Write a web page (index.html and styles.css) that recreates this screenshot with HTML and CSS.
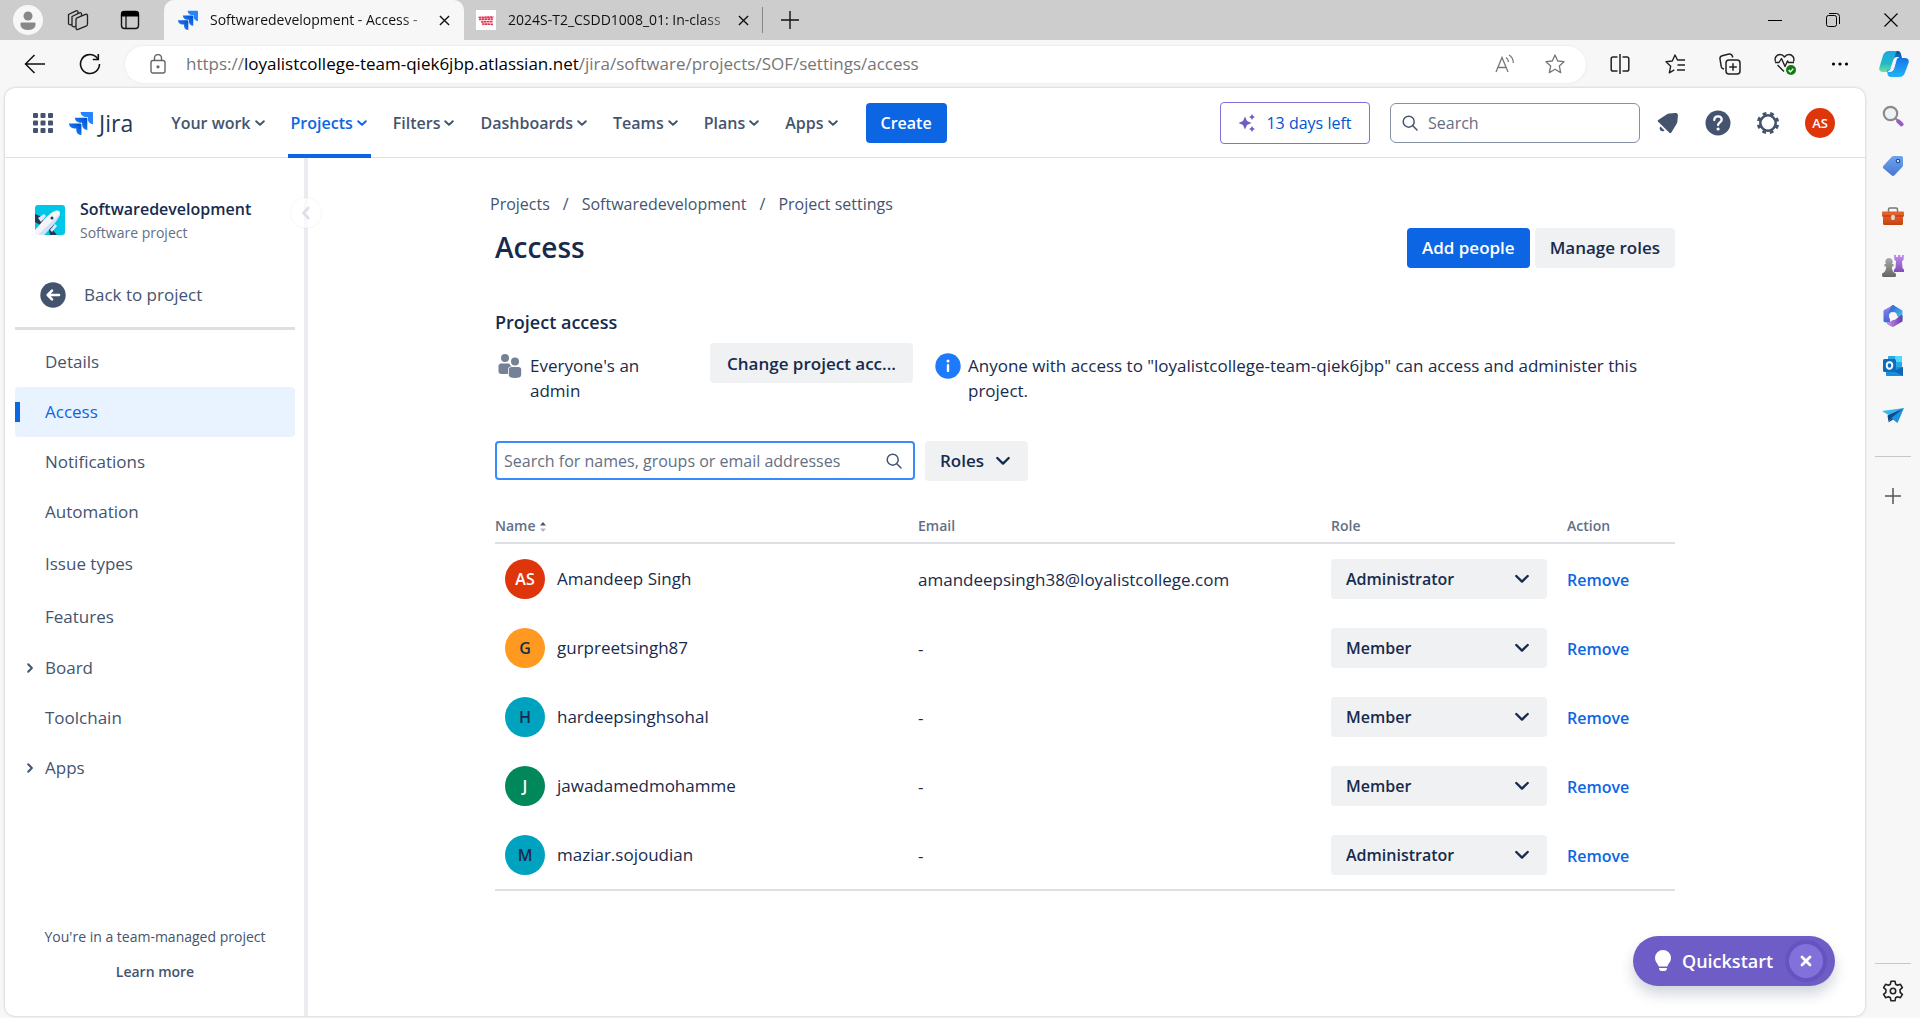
FILE: index.html
```html
<!DOCTYPE html>
<html lang="en">
<head>
<meta charset="utf-8">
<title>Softwaredevelopment - Access - Jira</title>
<link rel="stylesheet" href="styles.css">
</head>
<body>
<svg class="defs" aria-hidden="true">
  <defs>
    <linearGradient id="jiraDark" x1="1" y1="0" x2="0" y2="1"><stop offset="0.1" stop-color="#0052cc"/><stop offset="0.8" stop-color="#2684ff"/></linearGradient>
    <linearGradient id="copA" x1="0" y1="0" x2="0" y2="1"><stop offset="0" stop-color="#1ba8e0"/><stop offset="0.6" stop-color="#22b8c8"/><stop offset="1" stop-color="#6fe39b"/></linearGradient>
    <linearGradient id="copB" x1="0" y1="0" x2="0" y2="1"><stop offset="0" stop-color="#0f4f8f"/><stop offset="0.4" stop-color="#1a7ff0"/><stop offset="1" stop-color="#22b4f4"/></linearGradient>
    <linearGradient id="tagG" x1="0" y1="0" x2="0" y2="1"><stop offset="0" stop-color="#6ea5ee"/><stop offset="1" stop-color="#4777d4"/></linearGradient>
    <linearGradient id="boxG" x1="0" y1="0" x2="0" y2="1"><stop offset="0" stop-color="#e8622a"/><stop offset="1" stop-color="#c2410f"/></linearGradient>
    <linearGradient id="grayG" x1="0" y1="0" x2="0" y2="1"><stop offset="0" stop-color="#aaa"/><stop offset="1" stop-color="#666"/></linearGradient>
    <linearGradient id="rookG" x1="0" y1="0" x2="0" y2="1"><stop offset="0" stop-color="#c58cf0"/><stop offset="1" stop-color="#7d4fb8"/></linearGradient>
    <linearGradient id="mA" x1="0" y1="0" x2="0" y2="1"><stop offset="0" stop-color="#9a7be8"/><stop offset="1" stop-color="#3b6fd8"/></linearGradient>
    <linearGradient id="mB" x1="0" y1="0" x2="1" y2="1"><stop offset="0" stop-color="#2f5fd0"/><stop offset="1" stop-color="#4cc6f2"/></linearGradient>
    <linearGradient id="mC" x1="0" y1="0" x2="1" y2="0"><stop offset="0" stop-color="#c78bf0"/><stop offset="1" stop-color="#6b3fa8"/></linearGradient>
    <symbol id="jira" viewBox="0 0 24 24">
      <path fill="#2684ff" d="M23 1H11.6a5.1 5.1 0 0 0 5.1 5.1h2.1v2A5.1 5.1 0 0 0 24 13.200V2a1 1 0 0 0-1-1z"/>
      <path fill="url(#jiraDark)" d="M17.300 6.700H5.900a5.100 5.100 0 0 0 5.100 5.100h2.100v2a5.100 5.100 0 0 0 5.200 5.100V7.700a1 1 0 0 0-1-1z"/>
      <path fill="url(#jiraDark)" d="M11.500 12.400H0a5.100 5.100 0 0 0 5.200 5.100h2.100v2a5.100 5.100 0 0 0 5.100 4.500V13.400a1 1 0 0 0-.900-1z"/>
    </symbol>
    <symbol id="down" viewBox="0 0 12 12"><path d="M2.200 4.200 6 7.900l3.800-3.700" fill="none" stroke="currentColor" stroke-width="2" stroke-linecap="round" stroke-linejoin="round"/></symbol>
    <symbol id="down-large" viewBox="0 0 20 20"><path d="M4.300 7 10 12.600 15.700 7" fill="none" stroke="currentColor" stroke-width="2.400" stroke-linecap="round" stroke-linejoin="round"/></symbol>
    <symbol id="cross" viewBox="0 0 12 12"><path d="M1 1l10 10M11 1 1 11" fill="none" stroke="currentColor" stroke-width="1.500"/></symbol>
    <symbol id="lens" viewBox="0 0 16 16"><circle cx="6.700" cy="6.700" r="5.500" fill="none" stroke="currentColor" stroke-width="1.500"/><path d="M10.800 10.800 15 15" stroke="currentColor" stroke-width="1.500" stroke-linecap="round"/></symbol>
  </defs>
</svg>

<div class="browser">
  <header class="tabstrip">
    <button class="profile" aria-label="Profile"><svg viewBox="0 0 30 30" width="30" height="30"><circle cx="15" cy="15" r="15" fill="#f7f7f7"/><circle cx="15" cy="11" r="4.500" fill="#8a8886"/><path d="M8 18h14v2c0 3-3 4.500-7 4.500S8 23 8 20z" fill="#8a8886" stroke="#8a8886" stroke-linejoin="round"/></svg></button>
    <button class="strip-btn" aria-label="Workspaces"><svg viewBox="0 0 22 22" width="22" height="22" fill="#cdcdcd" stroke="#222" stroke-width="1.300" stroke-linejoin="round"><path d="M1.500 5.500 9 1.800c1-.5 2 0 2 1V12l-7.500 4-2-1z"/><path d="M5 7.500l7.500-3.700c1-.5 2 0 2 1V14L7 18l-2-1z"/><path d="M9 10.500c0-.8.400-1.400 1-1.700l8.500-3.500c1-.4 2 .2 2 1.200v8.700c0 .8-.400 1.400-1 1.700l-8.500 3.500c-1 .4-2-.2-2-1.200z"/></svg></button>
    <button class="strip-btn" aria-label="Tab actions"><svg viewBox="0 0 20 20" width="20" height="20"><rect x="1.500" y="1.500" width="17" height="17" rx="3" fill="none" stroke="#111" stroke-width="1.400"/><path d="M1 6.500V4a3 3 0 0 1 3-3h12a3 3 0 0 1 3 3v2.500z" fill="#000"/><path d="M6 6v12" stroke="#111" stroke-width="1.300"/></svg></button>
    <div class="tab tab-active">
      <svg width="20" height="20"><use href="#jira"/></svg>
      <span class="tab-title">Softwaredevelopment - Access -</span>
      <button class="tab-close" aria-label="Close tab"><svg width="11" height="11"><use href="#cross"/></svg></button>
    </div>
    <div class="tab">
      <svg width="20" height="20" viewBox="0 0 20 20"><path fill="#fff" d="M0 0h20v20H0z"/><path d="M2.500 7.500l15-.5M3 9.500l14-.5M5 12l12-.5M6 14l11 .3" stroke="#e8304f" stroke-width="1.700" stroke-dasharray="2.500 .4"/></svg>
      <span class="tab-title">2024S-T2_CSDD1008_01: In-class</span>
      <button class="tab-close" aria-label="Close tab"><svg width="11" height="11"><use href="#cross"/></svg></button>
    </div>
    <button class="new-tab" aria-label="New tab"><svg width="18" height="18" viewBox="0 0 18 18"><path d="M9 0v18M0 9h18" stroke="#111" stroke-width="1.400"/></svg></button>
    <div class="window-controls">
      <button aria-label="Minimize"><svg width="14" height="14" viewBox="0 0 14 14"><path d="M0 7.500h14" stroke="#000"/></svg></button>
      <button aria-label="Restore"><svg width="14" height="14" viewBox="0 0 14 14" fill="none" stroke="#000"><rect x=".5" y="2.500" width="10" height="11" rx="2"/><path d="M3 .5h7.500a3 3 0 0 1 3 3V11"/></svg></button>
      <button aria-label="Close"><svg width="14" height="14" viewBox="0 0 14 14"><path d="M.5.5l13 13M13.500.5l-13 13" stroke="#000" stroke-width="1.100"/></svg></button>
    </div>
  </header>

  <div class="toolbar">
    <button aria-label="Back"><svg width="22" height="20" viewBox="0 0 22 20" fill="none" stroke="#111" stroke-width="1.500"><path d="M21 10H1.500M10.500 1 1.500 10l9 9"/></svg></button>
    <button aria-label="Refresh"><svg width="22" height="22" viewBox="0 0 22 22" fill="none" stroke="#111" stroke-width="1.600"><path d="M20.500 11A9.500 9.500 0 1 1 16.500 3.300L19 6"/><path d="M19.300 1v5.500h-5.500"/></svg></button>
    <div class="address">
      <svg width="16" height="20" viewBox="0 0 16 20" fill="none" stroke="#666" stroke-width="1.400"><rect x="1" y="6.500" width="14" height="12.500" rx="2"/><path d="M4.500 6.500V4a3.500 3.500 0 0 1 7 0v2.500"/><circle cx="8" cy="12.800" r=".9" fill="#666"/></svg>
      <span class="url">https://<b>loyalistcollege-team-qiek6jbp.atlassian.net</b>/jira/software/projects/SOF/settings/access</span>
      <button aria-label="Read aloud"><svg width="20" height="20" viewBox="0 0 20 20" fill="none" stroke="#777" stroke-width="1.300"><path d="M1 18 7 3.500 13 18M3 13.500h8M11 3.500c1.500 1 2.500 2.500 2.500 4.500M14 1c2.500 1.500 4.300 4.500 4.300 8"/></svg></button>
      <button aria-label="Add to favourites"><svg width="20" height="20" viewBox="0 0 20 20" fill="none" stroke="#777" stroke-width="1.300" stroke-linejoin="round"><path d="M10 1l2.700 6 6.300.7-4.700 4.300 1.400 6.600L10 15.200l-5.700 3.400 1.400-6.600L1 7.700 7.300 7z"/></svg></button>
    </div>
    <div class="tools">
      <button aria-label="Split screen"><svg width="20" height="20" viewBox="0 0 20 20" fill="none" stroke="#222" stroke-width="1.500"><path d="M7.500 3H3a1.800 1.800 0 0 0-1.800 1.800v10.400A1.800 1.800 0 0 0 3 17h4.500M12.500 3H17a1.800 1.800 0 0 1 1.800 1.800v10.400A1.800 1.800 0 0 1 17 17h-4.500M10 0v20"/></svg></button>
      <button aria-label="Favourites"><svg width="20" height="20" viewBox="0 0 20 20" fill="none" stroke="#222" stroke-width="1.400" stroke-linejoin="round"><path d="M20 6h-7.500L10 1 7.300 7 1 7.700l4.700 4.500L4.300 18.800l5-3M12.500 11H20M12 16h8"/></svg></button>
      <button aria-label="Collections"><svg width="22" height="22" viewBox="0 0 22 22" fill="none" stroke="#222" stroke-width="1.500"><rect x="7" y="7" width="14" height="14" rx="3"/><path d="M14 10.200v7.600M10.200 14h7.600M5 16l-.9-.3a2.500 2.500 0 0 1-1.800-1.800L1 6a3 3 0 0 1 2.200-3.300L10 1a3 3 0 0 1 3.400 2l.3 1.500"/></svg></button>
      <button aria-label="Browser essentials"><svg width="22" height="22" viewBox="0 0 22 22" fill="none" stroke="#222" stroke-width="1.400" stroke-linejoin="round"><path d="M1.500 8.500C0 4.500 3 1.500 6 1.500c2.200 0 3.700 1.300 4.500 2.500.8-1.200 2.300-2.500 4.500-2.500 3 0 6 3 4.500 7M1 9.500h4l2.500-4 3.500 8L13.500 8l1 1.500h5.500M3.500 12l6.500 6.500"/><circle cx="17" cy="17" r="5" fill="#107c10" stroke="none"/><path d="M14.700 17l1.700 1.900 2.800-3.200" stroke="#fff"/></svg></button>
      <button aria-label="More"><svg width="18" height="6" viewBox="0 0 18 6"><circle cx="2.500" cy="3" r="1.600"/><circle cx="9" cy="3" r="1.600"/><circle cx="15.500" cy="3" r="1.600"/></svg></button>
      <button aria-label="Copilot"><svg width="30" height="28" viewBox="0 0 30 28"><path d="M10 1h8c2 0 3 1 3.500 3l1 4H18c-2 0-3 1-3.500 3l-2.500 8c-.6 2-1.500 3-3.500 3H4c-3 0-4.500-2-3.500-5L4 5.500C5 2.500 7 1 10 1z" fill="url(#copA)"/><path d="M18 1h.5c2 0 3 1 3.500 3l1 4H26c3 0 4.500 2 3.500 5L26 22.500c-1 3-3 4.500-6 4.500h-8c-2 0-3-1-3.500-3L8 20c2 0 3.300-1 4-3l4-11c.3-1.500.6-3.500 2-5z" fill="url(#copB)"/><path d="M19.500 7.500h-1.500c-2 0-2.800 1-3.400 3L12 18.500c-.7 2-1.500 2.700-3 3h1.500c2.500 0 3.500-.8 4.200-3l2.300-8c.5-1.800 1-2.700 2.500-3z" fill="#f7f7f7" stroke="#f7f7f7"/></svg></button>
    </div>
  </div>

  <div class="body">
    <div class="page">
      <header class="jira-header">
        <button class="apps" aria-label="Switch apps"><svg width="20" height="20" viewBox="0 0 20 20" fill="#44546f"><rect width="5" height="5" rx="1"/><rect x="7.500" width="5" height="5" rx="1"/><rect x="15" width="5" height="5" rx="1"/><rect y="7.500" width="5" height="5" rx="1"/><rect x="7.500" y="7.500" width="5" height="5" rx="1"/><rect x="15" y="7.500" width="5" height="5" rx="1"/><rect y="15" width="5" height="5" rx="1"/><rect x="7.500" y="15" width="5" height="5" rx="1"/><rect x="15" y="15" width="5" height="5" rx="1"/></svg></button>
        <a class="brand" href="#"><svg width="24" height="24"><use href="#jira"/></svg>Jira</a>
        <nav class="menu">
          <a href="#">Your work<svg><use href="#down"/></svg></a>
          <a href="#" class="current">Projects<svg><use href="#down"/></svg></a>
          <a href="#">Filters<svg><use href="#down"/></svg></a>
          <a href="#">Dashboards<svg><use href="#down"/></svg></a>
          <a href="#">Teams<svg><use href="#down"/></svg></a>
          <a href="#">Plans<svg><use href="#down"/></svg></a>
          <a href="#">Apps<svg><use href="#down"/></svg></a>
        </nav>
        <button class="btn primary create">Create</button>
        <button class="trial"><svg width="18" height="18" viewBox="0 0 18 18" fill="#6e5dc6"><path d="M7 2.500l2 4.500 4.500 2L9 11l-2 4.500L5 11 .5 9 5 7zM14 0l1.100 1.900L17 3l-1.900 1.100L14 6l-1.100-1.900L11 3l1.900-1.100zM14 12l1.100 1.900L17 15l-1.900 1.100L14 18l-1.100-1.900L11 15l1.900-1.100z"/></svg>13 days left</button>
        <label class="search"><svg width="16" height="16"><use href="#lens"/></svg><input type="text" placeholder="Search" aria-label="Search"></label>
        <div class="head-icons">
          <button aria-label="Notifications"><svg width="22" height="22" viewBox="0 0 22 22" fill="#44546f"><path d="M20.300 1.700c.6.600.7 1.300.6 2.300l-.5 5.500c-.1 1-.3 1.600-.9 2.400l-5 8.400c-.6 1-1.300 1.200-2.100.4L1.200 9.700C.4 8.900.6 8.200 1.600 7.700L10 2.300c.8-.5 1.500-.7 2.400-.8L18 1c1 0 1.700.1 2.300.7zM3.500 14.500l4 4c-1.200 1.200-3 1-4 0-1.100-1-1.200-2.800 0-4z"/></svg></button>
          <button aria-label="Help"><svg width="26" height="26" viewBox="0 0 26 26"><circle cx="13" cy="13" r="12.500" fill="#44546f"/><path d="M9.300 10c0-2.200 1.600-3.700 3.700-3.700s3.700 1.400 3.700 3.400c0 2.500-3.600 2.900-3.600 5.300" fill="none" stroke="#fff" stroke-width="2.300" stroke-linecap="round"/><circle cx="13.100" cy="19" r="1.600" fill="#fff"/></svg></button>
          <button aria-label="Settings"><svg width="24" height="24" viewBox="0 0 24 24" fill="none" stroke="#44546f"><circle cx="12" cy="12" r="7.700" stroke-width="2.600"/><circle cx="12" cy="12" r="9.700" stroke-width="3" stroke-dasharray="3.800 3.818" stroke-dashoffset="-1.900"/></svg></button>
          <button class="avatar small red" aria-label="Your profile">AS</button>
        </div>
      </header>

      <div class="columns">
        <aside class="sidebar">
          <div class="project">
            <svg width="30" height="30" viewBox="0 0 30 30"><rect width="30" height="30" rx="3" fill="#00c7e5"/><path d="M0 9l5 2 4 5 3-1-5 6-7-4zM13 21l5-5 1 5-2 3 5 6h-7z" fill="#253858"/><path d="M3 13l6-4 2 2-5 6zM15 25l5-6 2 2-5 6z" fill="#deebff"/><path d="M0 25C7 17 14 8 20 6c3-1 5 0 5 2 0 4-6 11-16 22H0z" fill="#f4f5f7"/><path d="M3 30C12 21 20 14 25 9c-1 5-8 13-16 21z" fill="#cfe0fb"/><circle cx="17" cy="13" r="1.500" fill="#253858"/></svg>
            <div><h2>Softwaredevelopment</h2><p>Software project</p></div>
          </div>
          <a class="back" href="#"><svg width="26" height="26" viewBox="0 0 26 26"><circle cx="13" cy="13" r="12.700" fill="#44546f"/><path d="M19 13H8.500M12 8.700 7.700 13l4.300 4.300" fill="none" stroke="#fff" stroke-width="2.600" stroke-linecap="round" stroke-linejoin="round"/></svg>Back to project</a>
          <nav class="side-nav">
            <a href="#">Details</a>
            <a href="#" class="selected">Access</a>
            <a href="#">Notifications</a>
            <a href="#">Automation</a>
            <a href="#" class="roomy">Issue types</a>
            <a href="#" class="roomy">Features</a>
            <a href="#"><svg class="right"><use href="#down"/></svg>Board</a>
            <a href="#">Toolchain</a>
            <a href="#"><svg class="right"><use href="#down"/></svg>Apps</a>
          </nav>
          <footer class="side-foot"><p>You're in a team-managed project</p><a href="#">Learn more</a></footer>
          <button class="collapse" aria-label="Collapse sidebar"><svg width="16" height="16" class="left"><use href="#down"/></svg></button>
        </aside>

        <main class="content">
          <nav class="crumbs"><a href="#">Projects</a><span>/</span><a href="#">Softwaredevelopment</a><span>/</span><a href="#">Project settings</a></nav>
          <div class="title-row">
            <h1>Access</h1>
            <button class="btn primary">Add people</button>
            <button class="btn">Manage roles</button>
          </div>
          <h3>Project access</h3>
          <div class="access-row">
            <svg width="24" height="24" viewBox="0 0 24 24" fill="#758195"><circle cx="7" cy="4" r="4"/><circle cx="17" cy="7.500" r="4"/><path d="M3 9.500h7.500c.6 0 1 .3 1.500 1a5 5 0 0 0 1.500 2H13c-2 0-3 1.500-3 3V20H3.500C1.500 20 .5 19 .5 17.500V12c0-1.500 1-2.500 2.500-2.500z"/><path d="M13.500 13h7c1.600 0 2.700 1 2.700 2.600V21c0 2-2 3-6.200 3s-6.200-1-6.200-3v-5.400C10.800 14 11.900 13 13.500 13z"/></svg>
            <p class="who">Everyone's an admin</p>
            <button class="btn">Change project acc...</button>
            <svg width="26" height="26" viewBox="0 0 26 26"><circle cx="13" cy="13" r="12.700" fill="#1d7afc"/><circle cx="13" cy="8" r="1.500" fill="#fff"/><rect x="11.800" y="11" width="2.400" height="8" rx="1" fill="#fff"/></svg>
            <p class="note">Anyone with access to "loyalistcollege-team-qiek6jbp" can access and administer this project.</p>
          </div>
          <div class="filters">
            <label class="people-search"><input type="text" placeholder="Search for names, groups or email addresses" aria-label="Search for names, groups or email addresses"><svg width="16" height="16"><use href="#lens"/></svg></label>
            <button class="btn roles">Roles<svg width="20" height="20"><use href="#down-large"/></svg></button>
          </div>
          <table class="people">
            <colgroup><col class="c-name"><col class="c-mail"><col class="c-role"><col></colgroup>
            <thead><tr><th>Name<svg width="6" height="12" viewBox="0 0 6 12"><path d="M3 1l3 3.500H0z" fill="#44546f"/><path d="M3 11l3-3.500H0z" fill="#b3b9c4"/></svg></th><th>Email</th><th>Role</th><th>Action</th></tr></thead>
            <tbody>
              <tr><td><div class="person"><span class="avatar red">AS</span>Amandeep Singh</div></td><td>amandeepsingh38@loyalistcollege.com</td><td><div class="pick"><select aria-label="Role of Amandeep Singh"><option>Administrator</option><option>Member</option></select><svg><use href="#down-large"/></svg></div></td><td><button class="remove">Remove</button></td></tr>
              <tr><td><div class="person"><span class="avatar orange">G</span>gurpreetsingh87</div></td><td>-</td><td><div class="pick"><select aria-label="Role of gurpreetsingh87"><option>Member</option><option>Administrator</option></select><svg><use href="#down-large"/></svg></div></td><td><button class="remove">Remove</button></td></tr>
              <tr><td><div class="person"><span class="avatar teal">H</span>hardeepsinghsohal</div></td><td>-</td><td><div class="pick"><select aria-label="Role of hardeepsinghsohal"><option>Member</option><option>Administrator</option></select><svg><use href="#down-large"/></svg></div></td><td><button class="remove">Remove</button></td></tr>
              <tr><td><div class="person"><span class="avatar green">J</span>jawadamedmohamme</div></td><td>-</td><td><div class="pick"><select aria-label="Role of jawadamedmohamme"><option>Member</option><option>Administrator</option></select><svg><use href="#down-large"/></svg></div></td><td><button class="remove">Remove</button></td></tr>
              <tr><td><div class="person"><span class="avatar teal">M</span>maziar.sojoudian</div></td><td>-</td><td><div class="pick"><select aria-label="Role of maziar.sojoudian"><option>Administrator</option><option>Member</option></select><svg><use href="#down-large"/></svg></div></td><td><button class="remove">Remove</button></td></tr>
            </tbody>
          </table>
        </main>
      </div>
      <div class="quickstart">
        <button class="qs-open"><svg width="16" height="22" viewBox="0 0 16 22" fill="#fff"><path d="M8 0a8 8 0 0 1 8 8c0 3-1.600 4.600-2.800 6.400-.5.800-.7 1.600-1 2.100H3.800c-.3-.5-.5-1.300-1-2.100C1.600 12.600 0 11 0 8a8 8 0 0 1 8-8zM4 18h8c0 2-1 3-2.500 3h-3C5 21 4 20 4 18z"/></svg>Quickstart</button>
        <button class="qs-close" aria-label="Dismiss"><svg width="12" height="12" viewBox="0 0 12 12"><path d="M2 2l8 8M10 2l-8 8" stroke="#fff" stroke-width="2.800" stroke-linecap="round"/></svg></button>
      </div>
    </div>

    <aside class="edge-bar">
      <button aria-label="Search"><svg width="22" height="22" viewBox="0 0 22 22"><path d="M13 13l3 2.700" stroke="#8a8a8a" stroke-width="2"/><path d="M16.300 16.300l3.200 3" stroke="#9b59d0" stroke-width="4" stroke-linecap="round"/><circle cx="8.500" cy="8.500" r="6.700" fill="#eef2f5" stroke="#8a8a8a" stroke-width="2.200"/></svg></button>
      <button aria-label="Shopping"><svg width="22" height="22" viewBox="0 0 22 22"><path d="M12 1h7c1.500 0 2 .8 2 2v7c0 1-.3 1.500-1 2.300l-7.500 8c-1 1-2 1-3 0L1.500 13.500c-1-1-.8-2 0-2.800L9.500 2c.8-.8 1.500-1 2.500-1z" fill="url(#tagG)"/><circle cx="16" cy="6" r="1.700" fill="#fff" stroke="#2450a4" stroke-width="1.300"/></svg></button>
      <button aria-label="Tools"><svg width="22" height="18" viewBox="0 0 22 18"><path d="M6.500 5V2.500c0-.8.500-1.500 1.500-1.500h6c1 0 1.500.7 1.500 1.500V5" fill="none" stroke="#777" stroke-width="1.500"/><rect x="1" y="8" width="20" height="10" rx="1.500" fill="url(#boxG)"/><rect y="4.500" width="22" height="4.500" rx="1" fill="#e5602b"/><path d="M0 9h22" stroke="#a5350b"/><rect x="9.200" y="8" width="3.600" height="5" rx="1.200" fill="#d9d9d9"/></svg></button>
      <button aria-label="Games"><svg width="22" height="24" viewBox="0 0 22 24"><path d="M12 1h2v2h2V1h2.500v2h1.500V1h2l-.500 5-1.500 1 .5 7 1.500 1.500V18H12v-2.500l1.500-1.500.5-7-1.500-1z" fill="url(#rookG)"/><path d="M7 4a3.800 3.800 0 0 1 3 6h1.500v2.500H9.800c.2 3 .7 4.500 2.200 6 1.500 0 2 1 2 2.500 0 1.500-.5 2-1.500 2h-11C.5 23 0 22.500 0 21c0-1.500.5-2.500 2-2.500 1.500-1.500 2-3 2.200-6H2.500V10H4a3.800 3.800 0 0 1 3-6z" fill="url(#grayG)"/></svg></button>
      <button aria-label="Microsoft 365"><svg width="22" height="24" viewBox="0 0 22 24" stroke-width="2" stroke-linejoin="round"><path d="M11 2 2.500 7v10L7 18V9z" fill="url(#mA)" stroke="url(#mA)"/><path d="M11 2l8.500 5v8L14 9 7.500 8.500z" fill="url(#mB)" stroke="url(#mB)"/><path d="M19.500 12v5L11 22l-5-2.500L14 16z" fill="url(#mC)" stroke="url(#mC)"/><circle cx="11" cy="12" r="4" fill="#f7f7f7"/></svg></button>
      <button aria-label="Outlook"><svg width="22" height="22" viewBox="0 0 22 22"><rect x="6" y="1" width="14" height="18" rx="1" fill="#28a8ea"/><path d="M13 1h7v6h-7z" fill="#50d9ff"/><path d="M4 12l17 0v8c0 .6-.4 1-1 1H5c-.6 0-1-.4-1-1z" fill="#1490df"/><path d="M21 12v9L12 16z" fill="#1066b5"/><rect x="1" y="4" width="13" height="13" rx="1.500" fill="#0f6cbd"/><ellipse cx="7.500" cy="10.500" rx="2.800" ry="3.200" fill="none" stroke="#fff" stroke-width="1.900"/></svg></button>
      <button aria-label="Drop"><svg width="22" height="18" viewBox="0 0 22 18"><path d="M0 4 22 1 8 9z" fill="#38b6f1"/><path d="M22 1 15.500 16 9 11z" fill="#1b93e0"/><path d="M22 1 5.500 8.500 6.500 15 9.500 11z" fill="#0c4a8a"/><path d="M9.500 11 6.500 15.500l4.500-3z" fill="#083a70"/></svg></button>
      <hr>
      <button aria-label="Customize"><svg width="16" height="16" viewBox="0 0 16 16"><path d="M8 0v16M0 8h16" stroke="#555" stroke-width="1.500"/></svg></button>
      <div class="edge-end">
        <hr>
        <button aria-label="Settings"><svg width="22" height="22" viewBox="0 0 22 22" fill="none" stroke="#222" stroke-width="1.600" stroke-linejoin="round"><path d="M9 1.200h4l.6 3 1.900 1.100 2.900-1 2 3.400-2.300 2v2.600l2.300 2-2 3.400-2.900-1-1.900 1.100-.6 3H9l-.6-3-1.900-1.100-2.900 1-2-3.400 2.300-2V9.700l-2.300-2 2-3.400 2.900 1 1.900-1.100z"/><circle cx="11" cy="11" r="2.700"/></svg></button>
      </div>
    </aside>
  </div>
</div>
</body>
</html>
```
FILE: styles.css
```css
* { box-sizing: border-box; }

:root {
  --ink: #172b4d;
  --subtle: #44546f;
  --muted: #626f86;
  --blue: #0c66e4;
  --chrome: #f7f7f7;
}

body {
  margin: 0;
  font: 16px/24px "Open Sans", "Noto Sans", sans-serif;
  color: var(--ink);
  background: var(--chrome);
}

h1, h2, h3, p { margin: 0; }
a { color: inherit; text-decoration: none; }
svg { display: block; flex: none; }
button, input, select { font: inherit; color: inherit; }
button {
  display: flex;
  align-items: center;
  justify-content: center;
  padding: 0;
  border: 0;
  background: none;
  white-space: nowrap;
}
.defs { position: absolute; width: 0; height: 0; }

.browser { display: flex; flex-direction: column; min-height: 100vh; }

/* Tab strip */
.tabstrip {
  display: flex;
  align-items: center;
  height: 40px;
  padding-left: 13px;
  background: #cdcdcd;
  color: #111;
  font-size: 14px;
}
.strip-btn { width: 22px; margin-left: 24px; }
.strip-btn + .strip-btn { margin-left: 30px; }
.tab {
  display: flex;
  align-items: center;
  gap: 12px;
  width: 298px;
  height: 40px;
  padding: 0 13px 0 12px;
}
.tab-active {
  width: 300px;
  margin-left: 23px;
  padding: 0 14px;
  background: var(--chrome);
  border-radius: 10px 10px 0 0;
}
.tab-title {
  flex: 1;
  white-space: nowrap;
  mask-image: linear-gradient(to right, #000 88%, #0006);
}
.tab-close { width: 11px; }
.new-tab { width: 54px; height: 26px; border-left: 1px solid #888; }
.window-controls { display: flex; margin-left: auto; }
.window-controls button { width: 58px; height: 40px; }

/* Toolbar */
.toolbar {
  display: flex;
  align-items: center;
  height: 48px;
  padding-left: 24px;
}
.toolbar > button { width: 22px; margin-right: 33px; }
.toolbar > button + button { margin-right: 24px; }
.address {
  flex: 1;
  display: flex;
  align-items: center;
  height: 37px;
  padding: 0 21px 0 25px;
  border-radius: 19px;
  background: #fff;
  box-shadow: 0 0 3px #00000014;
  color: #767676;
  font-size: 17px;
}
.address button { width: 20px; margin-left: 30px; }
.url { flex: 1; margin-left: 20px; white-space: nowrap; }
.url b { font-weight: 400; color: #000; }
.tools { display: flex; padding-left: 6px; }
.tools button { width: 55px; }
.tools button:last-child { width: 53px; }

/* Page frame */
.body { flex: 1; display: flex; padding: 0 0 2px 5px; }
.page {
  position: relative;
  flex: 1;
  display: flex;
  flex-direction: column;
  background: #fff;
  border-radius: 10px;
  box-shadow: 0 0 3px #0000003a;
  overflow: hidden;
}
.edge-bar {
  display: flex;
  flex-direction: column;
  align-items: center;
  width: 55px;
  padding-top: 3px;
}
.edge-bar button { width: 50px; height: 50px; }
.edge-bar hr { width: 36px; margin: 15px 0 14px; border: 0; border-top: 1px solid #c8c8c8; }
.edge-end { margin-top: auto; display: flex; flex-direction: column; align-items: center; }
.edge-end hr { margin: 0 0 2px; }

/* Jira header */
.jira-header {
  display: flex;
  align-items: center;
  height: 70px;
  padding: 0 30px 0 28px;
  border-bottom: 1px solid #dcdfe4;
  color: var(--subtle);
}
.brand {
  display: flex;
  align-items: center;
  gap: 6px;
  margin: 0 35px 0 16px;
  color: #253858;
  font-size: 23px;
  font-weight: 500;
}
.menu { display: flex; align-self: stretch; gap: 19px; font-weight: 600; }
.menu a {
  display: flex;
  align-items: center;
  gap: 3px;
  padding: 0 3px;
  border-block: 4px solid transparent;
  margin-bottom: -1px;
}
.menu svg { width: 12px; height: 12px; }
.menu .current { color: var(--blue); border-bottom-color: var(--blue); }

.btn {
  height: 40px;
  padding: 0 15px;
  border-radius: 4px;
  background: #f0f1f3;
  font-weight: 600;
}
.btn.primary { background: var(--blue); color: #fff; }
.create { margin-left: 24px; }
.trial {
  gap: 10px;
  width: 150px;
  height: 42px;
  margin-left: auto;
  border: 1px solid #8270db;
  border-radius: 4px;
  color: #0055cc;
}
.search {
  display: flex;
  align-items: center;
  gap: 10px;
  width: 250px;
  height: 40px;
  margin: 0 15px 0 20px;
  padding: 0 11px;
  border: 1px solid #8590a2;
  border-radius: 6px;
}
input { border: 0; outline: 0; background: none; min-width: 0; flex: 1; padding: 0; }
input::placeholder { color: var(--muted); opacity: 1; }
.head-icons { display: flex; align-items: center; gap: 24px; }
.head-icons button { width: 26px; }

.avatar {
  display: flex;
  align-items: center;
  justify-content: center;
  width: 40px;
  height: 40px;
  border-radius: 50%;
  font-size: 16px;
  font-weight: 600;
}
.head-icons .small { width: 30px; height: 30px; font-size: 13px; }
.red { background: #de350b; color: #fff; }
.orange { background: #ff991f; }
.teal { background: #00a3bf; }
.green { background: #00875a; color: #fff; }

/* Project sidebar */
.columns { flex: 1; display: flex; font-size: 17px; }
.sidebar {
  position: relative;
  display: flex;
  flex-direction: column;
  width: 303px;
  padding: 38px 9px 27px 10px;
  border-right: 4px solid #ebecf0;
  color: var(--subtle);
}
.project { display: flex; align-items: center; gap: 15px; padding: 0 20px; }
.project h2 { font-size: 16px; line-height: 26px; font-weight: 600; color: var(--ink); }
.project p { font-size: 14px; line-height: 22px; color: var(--muted); }
.back {
  display: flex;
  align-items: center;
  gap: 18px;
  height: 86px;
  padding: 18px 25px 0;
  border-bottom: 3px solid #dcdfe4;
}
.side-nav { display: flex; flex-direction: column; padding-top: 7px; }
.side-nav a {
  display: flex;
  align-items: center;
  height: 50px;
  padding-left: 30px;
  border-radius: 4px;
}
.side-nav .roomy { height: 53px; }
.side-nav .selected {
  color: var(--blue);
  background: linear-gradient(var(--blue), var(--blue)) 0 50% / 5px 20px no-repeat, #e9f2ff;
}
.right { width: 12px; height: 12px; margin: 0 9px 0 -21px; transform: rotate(-90deg); }
.left { transform: rotate(90deg); }
.side-foot { margin-top: auto; text-align: center; font-size: 14px; line-height: 35px; }
.side-foot a { font-weight: 600; }
.collapse {
  position: absolute;
  top: 40px;
  right: -17px;
  width: 30px;
  height: 30px;
  border-radius: 50%;
  background: #ffffffb0;
  box-shadow: 0 0 2px #0000001a;
  color: #dcdfe4;
}

/* Access settings */
.content { flex: 1; min-width: 0; padding: 34px 190px 40px 187px; }
.crumbs { display: flex; gap: 13px; margin-left: -5px; color: var(--subtle); font-size: 16px; }
.title-row { display: flex; align-items: center; gap: 5px; margin-top: 12px; }
h1 { flex: 1; padding-bottom: 2px; font-size: 28px; line-height: 36px; font-weight: 600; }
h3 { margin-top: 41px; font-size: 18px; line-height: 26px; font-weight: 600; }
.access-row { display: flex; align-items: flex-start; margin-top: 8px; line-height: 25px; }
.access-row > svg { margin: 11px 8px 0 3px; }
.access-row > .btn { width: 203px; }
.access-row > .btn + svg { margin: 10px 7px 0 22px; }
.access-row p { padding-top: 10px; }
.who { width: 130px; margin-right: 50px; }
.note { flex: 1; max-width: 690px; }
.filters { display: flex; gap: 10px; margin-top: 38px; }
.people-search {
  display: flex;
  align-items: center;
  width: 420px;
  height: 39px;
  padding: 0 11px 0 7px;
  border: 2px solid #388bff;
  border-radius: 4px;
  color: var(--subtle);
  font-size: 16px;
}
.roles { gap: 9px; }

.people { width: 100%; margin-top: 28px; border-spacing: 0; table-layout: fixed; }
.c-name { width: 423px; }
.c-mail { width: 413px; }
.c-role { width: 236px; }
.people th {
  height: 35px;
  padding: 0;
  border-bottom: 2px solid #dcdfe4;
  text-align: left;
  font-size: 14px;
  font-weight: 600;
  color: var(--muted);
}
.people th svg { display: inline-block; margin-left: 4px; vertical-align: -2px; }
.people td { height: 69px; padding: 0; }
.people td:nth-child(even) { padding-top: 3px; }
.people tr:last-child td { height: 71px; border-bottom: 2px solid #dcdfe4; }
.person { display: flex; align-items: center; gap: 12px; padding-left: 10px; }
.pick { display: grid; width: 216px; }
.pick select {
  grid-area: 1 / 1;
  appearance: none;
  height: 40px;
  padding: 0 15px;
  border: 0;
  border-radius: 4px;
  background: #f0f1f3;
  font-size: 16px;
  font-weight: 600;
}
.pick svg {
  grid-area: 1 / 1;
  place-self: center end;
  width: 20px;
  height: 20px;
  margin-right: 15px;
  pointer-events: none;
}
.remove { color: var(--blue); font-size: 16px; font-weight: 600; }

.quickstart {
  position: absolute;
  right: 30px;
  bottom: 30px;
  display: flex;
  align-items: center;
  justify-content: space-between;
  width: 202px;
  height: 50px;
  padding: 0 12px 0 22px;
  border-radius: 25px;
  background: #6e5dc6;
  box-shadow: 0 8px 14px #091e4230;
  color: #fff;
}
.qs-open { gap: 11px; font-size: 18px; font-weight: 600; }
.qs-close { width: 34px; height: 34px; border-radius: 50%; background: #8270db; box-shadow: 0 0 0 4px #6554c0; }
```
